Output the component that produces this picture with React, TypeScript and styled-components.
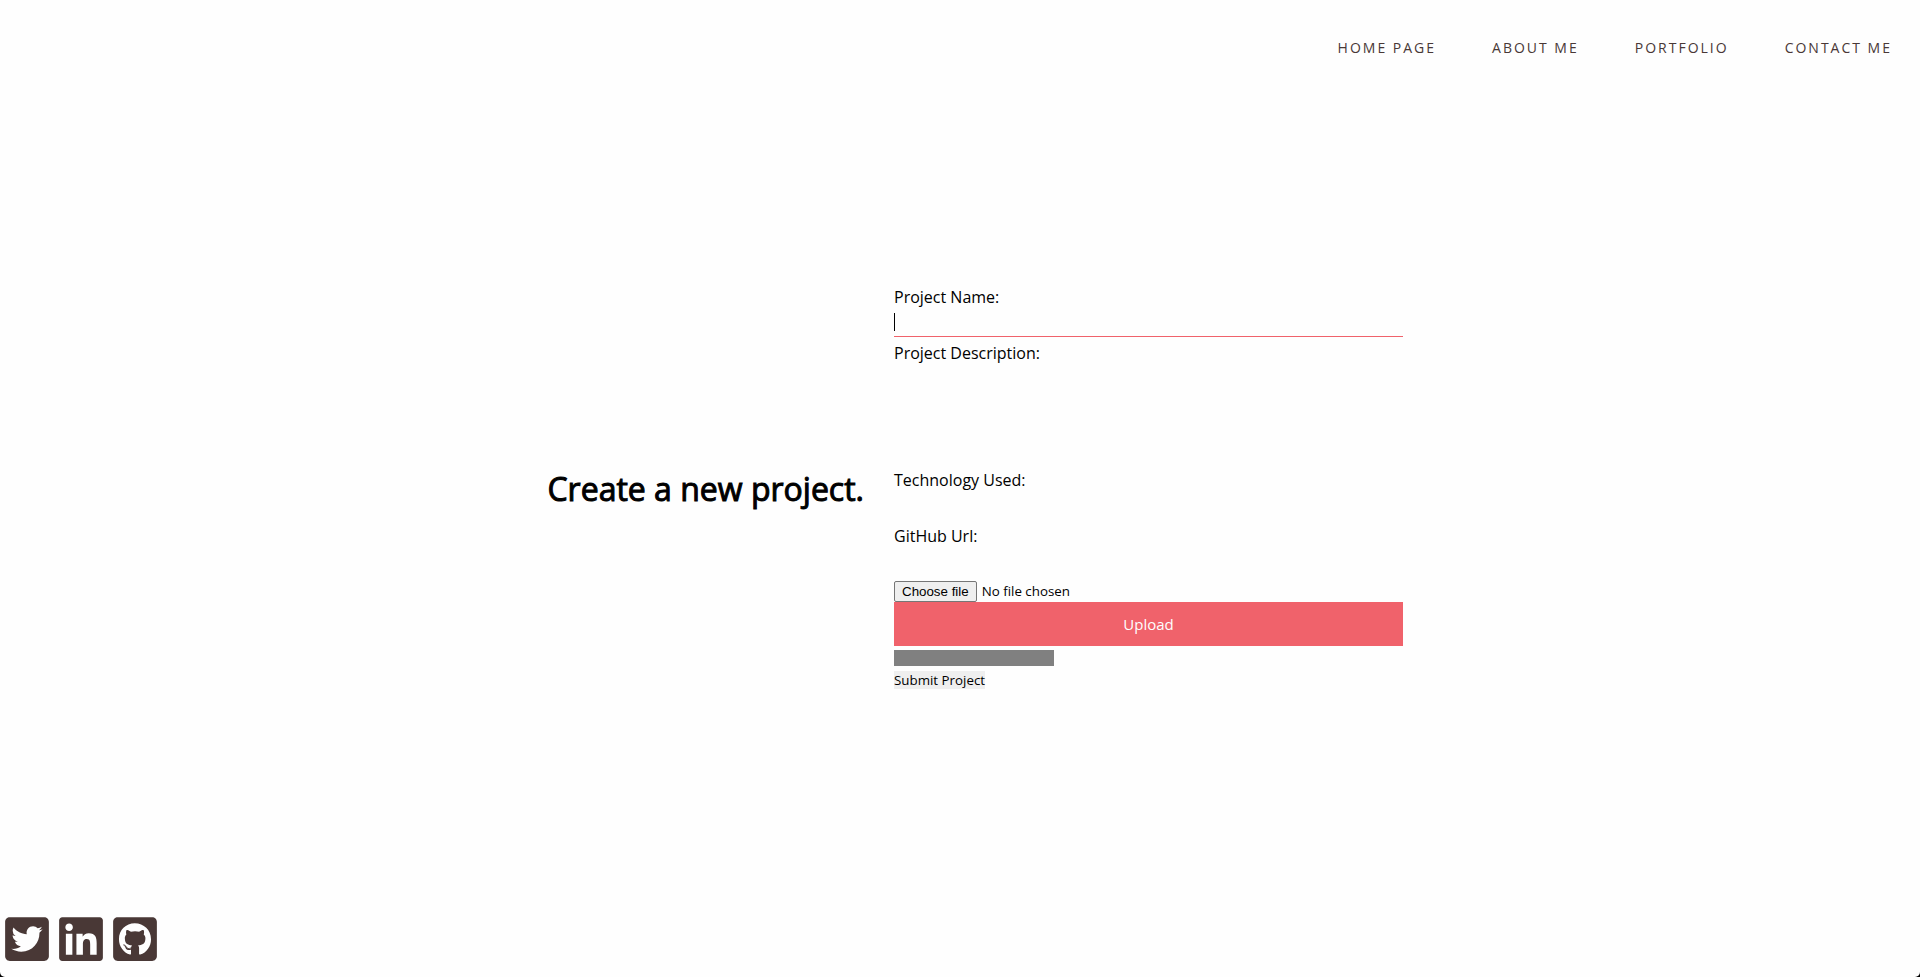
import React, { useState } from "react";
import styled, { createGlobalStyle } from "styled-components";
import { FaTwitterSquare, FaLinkedin, FaGithubSquare } from "react-icons/fa";

const GlobalStyle = createGlobalStyle`
  * { box-sizing: border-box; }
  body {
    margin: 0;
    background: #000;
    color: #000;
    font-family: "Open Sans", "Noto Sans", sans-serif;
    font-size: 16px;
  }
  button, input, textarea { font-family: inherit; }
`;

const Page = styled.div`
  min-height: 100vh;
  display: flex;
  flex-direction: column;
  background: #fefefe;
  border-radius: 0 0 5px 5px;
`;

const Header = styled.header`
  min-height: 96px;
  padding: 0 28px;
  display: flex;
  align-items: center;
  justify-content: flex-end;
`;

const Nav = styled.nav`
  display: flex;
  gap: 56px;
`;

const NavLink = styled.a`
  color: #493836;
  font-size: 14px;
  line-height: 20px;
  letter-spacing: 2px;
  text-transform: uppercase;
  text-decoration: none;
`;

const Main = styled.main`
  flex: 1;
  display: grid;
  grid-template-columns: 864fr 509fr 487fr;
  column-gap: 30px;
  align-items: center;
`;

const Title = styled.h1`
  margin: 0;
  text-align: right;
  font-size: 32px;
  line-height: 44px;
  font-weight: 400;
  -webkit-text-stroke: 1px #000;
`;

const Form = styled.form`
  display: flex;
  flex-direction: column;
  align-items: flex-start;
  padding-bottom: 3px;
`;

const Field = styled.div`
  width: 100%;
  display: flex;
  flex-direction: column;
  margin-bottom: 4px;
`;

const Label = styled.label`
  line-height: 24px;
`;

/* The caret is a steady one-pixel bar that shows while the field is empty. */
const Input = styled.input`
  height: 28px;
  padding: 0;
  border: 0;
  border-bottom: 1px solid transparent;
  outline: 0;
  background: transparent;
  font-size: 14px;
  &:focus { border-bottom-color: #f0626b; }
  &:focus:placeholder-shown {
    caret-color: transparent;
    background: linear-gradient(#000, #000) 0 4px / 1px 18px no-repeat;
  }
`;

const TextArea = styled.textarea`
  height: 99px;
  padding: 0;
  border: 0;
  outline: 0;
  resize: none;
  background: transparent;
  font-size: 14px;
`;

const FilePicker = styled.label`
  margin-top: 1px;
  display: flex;
  align-items: center;
  gap: 5px;
  font-size: smaller;
  line-height: 19px;
`;

const HiddenFileInput = styled.input`
  position: absolute;
  width: 1px;
  height: 1px;
  opacity: 0;
`;

const FileButton = styled.span`
  padding: 0 7px;
  border: 1px solid #767676;
  border-radius: 2px;
  background: #efefef;
  font-family: "Liberation Sans", Arial, sans-serif;
`;

const UploadButton = styled.button`
  width: 100%;
  height: 44px;
  border: 0;
  background: #f0626b;
  color: #fefefe;
  font-size: 15px;
`;

const Progress = styled.progress`
  appearance: none;
  width: 160px;
  height: 16px;
  margin: 4px 0 5px;
  border: 0;
  background: #808080;
  &::-webkit-progress-bar { background: #808080; }
  &::-webkit-progress-value { background: #f0626b; }
`;

const SubmitButton = styled.button`
  padding: 0;
  border: 0;
  background: #efefef;
  color: #000;
  font-size: smaller;
  line-height: 18px;
`;

const Footer = styled.footer`
  min-height: 96px;
  padding: 0 5px 13px;
  display: flex;
  align-items: flex-end;
  gap: 10px;
`;

const SocialLink = styled.a`
  display: flex;
  color: #493836;
  svg { width: 44px; height: 50px; }
`;

const pages = ["Home page", "About me", "Portfolio", "Contact me"];

const socials = [
  { name: "Twitter", Icon: FaTwitterSquare },
  { name: "LinkedIn", Icon: FaLinkedin },
  { name: "GitHub", Icon: FaGithubSquare },
];

export default function App() {
  const [fileName, setFileName] = useState("No file chosen");

  return (
    <>
      <GlobalStyle />
      <Page>
        <Header>
          <Nav>
            {pages.map((page) => (
              <NavLink key={page} href="#">{page}</NavLink>
            ))}
          </Nav>
        </Header>
        <Main>
          <Title>Create a new project.</Title>
          <Form onSubmit={(e) => e.preventDefault()}>
            <Field>
              <Label htmlFor="name">Project Name:</Label>
              <Input id="name" type="text" placeholder=" " autoFocus />
            </Field>
            <Field>
              <Label htmlFor="description">Project Description:</Label>
              <TextArea id="description" />
            </Field>
            <Field>
              <Label htmlFor="technology">Technology Used:</Label>
              <Input id="technology" type="text" placeholder=" " />
            </Field>
            <Field>
              <Label htmlFor="github">GitHub Url:</Label>
              <Input id="github" type="text" placeholder=" " />
            </Field>
            <FilePicker>
              <HiddenFileInput
                type="file"
                onChange={(e) => setFileName(e.target.files?.[0]?.name ?? "No file chosen")}
              />
              <FileButton>Choose file</FileButton>
              <span>{fileName}</span>
            </FilePicker>
            <UploadButton type="button">Upload</UploadButton>
            <Progress value={0} max={100} aria-label="Upload progress" />
            <SubmitButton type="submit">Submit Project</SubmitButton>
          </Form>
        </Main>
        <Footer>
          {socials.map(({ name, Icon }) => (
            <SocialLink key={name} href="#" aria-label={name}>
              <Icon />
            </SocialLink>
          ))}
        </Footer>
      </Page>
    </>
  );
}
